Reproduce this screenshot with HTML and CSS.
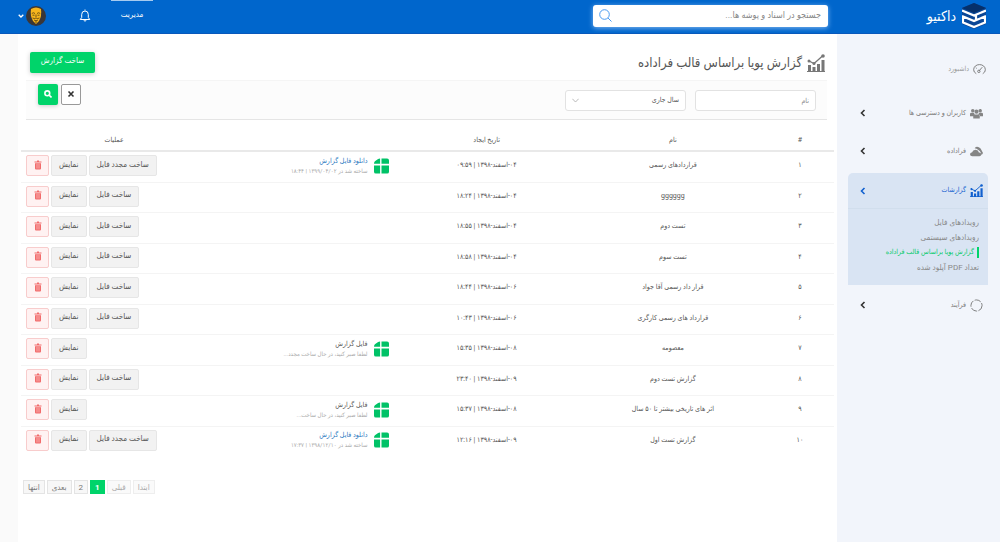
FILE: index.html
```html
<!DOCTYPE html>
<html lang="fa" dir="rtl">
<head>
<meta charset="utf-8">
<meta name="viewport" content="width=device-width, initial-scale=1">
<title>داکتیو</title>
<link rel="stylesheet" href="styles.css">
</head>
<body>
<svg width="0" height="0" class="sprite" aria-hidden="true">
  <symbol id="chart" viewBox="0 0 18 18"><path d="M1 11h3v6H1zM5.500 13h3v4h-3zM10 10h3v7h-3zM14.500 6h3v11h-3zM0 17h18v1H0z" fill="currentColor"/><path d="M2 7l5 2.500L11 6l5-4.500" fill="none" stroke="currentColor" stroke-width="1.300"/><circle cx="2" cy="7" r="1.500" fill="currentColor"/><circle cx="7" cy="9.500" r="1.500" fill="currentColor"/><circle cx="16" cy="2" r="1.800" fill="currentColor"/></symbol>
  <symbol id="chev" viewBox="0 0 6 8"><path d="M4.500 1L1.500 4l3 3" fill="none" stroke="currentColor" stroke-width="1.600"/></symbol>
  <symbol id="trash" viewBox="0 0 8 10"><path d="M0.500 2h7M3 1h2" stroke="currentColor" fill="none" stroke-width="1.200"/><path d="M1 3.200h6V8.500q0 1-1 1H2q-1 0-1-1z" fill="currentColor"/><path d="M3 4v4.500M5 4v4.500" stroke="#fff0f0" stroke-width=".5"/></symbol>
  <symbol id="sheet" viewBox="0 0 16 16"><path d="M6.500 0v5.500H0q0-1.500 1-2.500L4 .700Q5 0 6.500 0zM8 0h6q2 0 2 2v3.500H8zM0 7.500h6.500V16H2q-2 0-2-2zM8 7.500h8V14q0 2-2 2H8z" fill="currentColor"/></symbol>
</svg>
<header class="topbar">
  <a class="brand" href="#"><svg class="brand-logo" viewBox="0 0 24 26"><path d="M0 5L12 0l12 5v16l-12 5L0 21z" fill="#0b4796"/><path d="M0 5L12 0l12 5-12 5z" fill="#06306a"/><path d="M0 7.500l12 5 12-5M14 12v4.500M0 13l12 5 12-5M1 13v6M23 13v6M0 19l12 5 12-5" fill="none" stroke="#fff" stroke-width="2.200"/></svg><span>داکتیو</span></a>
  <form class="search"><input type="search" aria-label="جستجو" placeholder="جستجو در اسناد و پوشه ها..."><button type="button" aria-label="جستجو"><svg viewBox="0 0 13 13"><circle cx="5.500" cy="5.500" r="4.800"/><path d="M9 9l3.500 3.500"/></svg></button></form>
  <nav class="tools">
    <a class="tab" href="#">مدیریت</a>
    <button class="bell" type="button" aria-label="اعلان ها"><svg viewBox="0 0 11 13"><path d="M5.500.5v1M.7 10.500h9.600L8.800 8.500V5.500q0-3.500-3.300-3.500T2.200 5.500v3zM4 11q1.500 2.500 3 0"/></svg></button>
    <button class="user" type="button" aria-label="حساب کاربری"><svg class="avatar" viewBox="0 0 20 20"><circle cx="10" cy="10" r="10" fill="#3a3636"/><path d="M5 3q5-3 10 0 1 7-2 12l-3 3-3-3Q4 10 5 3z" fill="#f6b51d"/><path d="M5.800 7.500q1.500-1.500 3.200 0M11 7.500q1.700-1.500 3.200 0M6.500 9.200h2M11.500 9.200h2M6.500 12q2 1 3.500 0 1.500 1 3.500 0M8 14q2 1.500 4 0M10 8.500V11M10 15v2" stroke="#3a2a10" stroke-width=".7" fill="none"/></svg><svg class="caret" viewBox="0 0 6 4"><path d="M.7.700L3 3 5.300.700"/></svg></button>
  </nav>
</header>
<div class="shell">
  <aside class="sidebar">
    <a class="item dash" href="#"><svg class="ico line" viewBox="0 0 14 12"><path d="M3.500 10.500Q.7 9 .7 6.300C.7 3 3.500.7 7 .7s6.300 2.300 6.300 5.600q0 2.700-2.800 4.200M6.500 7.500L10 3.500M3 4l1 .8"/><circle cx="6.300" cy="8" r="1.300"/></svg><span>داشبورد</span></a>
    <a class="item" href="#"><svg class="ico" viewBox="0 0 14 12"><circle cx="3" cy="3" r="1.900"/><circle cx="11" cy="3" r="1.900"/><circle cx="7" cy="4" r="2.200"/><path d="M0 9V6.500q0-1.300 1.500-1.300h2.500L5 6.500 3.500 9zM14 9V6.500q0-1.300-1.500-1.300H10L9 6.500 10.500 9zM3.500 11.500V8.500Q3.500 7 5 7h4q1.500 0 1.500 1.500v3z"/></svg><span>کاربران و دسترسی ها</span><svg class="chev"><use href="#chev"/></svg></a>
    <a class="item" href="#"><svg class="ico" viewBox="0 0 14 12"><path d="M5 2.500Q7 0 9.500 1.500q3 1.500 4.500 6l-1.500 2.500Q12 6 9 4.500 7 2.500 5 2.500z"/><path d="M2.500 11Q0 11 0 9t2.300-2.300Q3 4 6 4q3 .2 3.600 3Q12 7 12 9.200 12 11 10 11z"/></svg><span>فراداده</span><svg class="chev"><use href="#chev"/></svg></a>
    <section class="group">
      <a class="item active" href="#"><svg class="ico"><use href="#chart"/></svg><span>گزارشات</span><svg class="chev"><use href="#chev"/></svg></a>
      <ul class="sub">
        <li><a href="#">رویدادهای فایل</a></li>
        <li><a href="#">رویدادهای سیستمی</a></li>
        <li><a class="current" href="#">گزارش پویا براساس قالب فراداده</a></li>
        <li><a href="#">تعداد PDF آپلود شده</a></li>
      </ul>
    </section>
    <a class="item" href="#"><svg class="ico line" viewBox="0 0 14 14"><circle cx="7" cy="7" r="6" stroke-dasharray="7 1.500"/></svg><span>فرآیند</span><svg class="chev"><use href="#chev"/></svg></a>
  </aside>
  <main class="content">
    <div class="heading"><h1><svg><use href="#chart"/></svg>گزارش پویا براساس قالب فراداده</h1><button class="build" type="button">ساخت گزارش</button></div>
    <form class="filter">
      <input type="text" aria-label="نام" placeholder="نام">
      <div class="pick"><select aria-label="بازه زمانی"><option>سال جاری</option></select><svg viewBox="0 0 6 4"><path d="M.3.500L3 3.300 5.700.500"/></svg></div>
      <div class="filter-actions"><button class="clear" type="button" aria-label="پاک کردن"><svg viewBox="0 0 8 8"><path d="M1.500 1.500l5 5M6.500 1.500l-5 5"/></svg></button><button class="go" type="button" aria-label="جستجو"><svg viewBox="0 0 8 8"><circle cx="3.300" cy="3.300" r="2.400"/><path d="M5 5l2.500 2.500"/></svg></button></div>
    </form>
    <table class="reports">
      <thead><tr><th class="num">#</th><th>نام</th><th>تاریخ ایجاد</th><th></th><th>عملیات</th></tr></thead>
      <tbody id="rows"></tbody>
    </table>
    <nav class="pager" aria-label="صفحات"><button type="button" disabled>ابتدا</button><button type="button" disabled>قبلی</button><button type="button" class="on">1</button><button type="button">2</button><button type="button">بعدی</button><button type="button">انتها</button></nav>
  </main>
</div>
<script src="app.js"></script>
</body>
</html>
```

FILE: styles.css
```css
* { box-sizing: border-box; }
body { margin: 0; min-height: 100vh; display: flex; flex-direction: column; background: #fafafa; color: #555; font: 8px/15px Roboto, "DejaVu Sans Condensed", "DejaVu Sans", sans-serif; }
a { color: inherit; text-decoration: none; }
button, input, select { font: inherit; color: inherit; margin: 0; padding: 0; }
button { border: 0; background: none; display: inline-flex; align-items: center; justify-content: center; }
.sprite { position: absolute; }

.topbar { height: 34px; flex: none; display: flex; align-items: center; background: #0066cc; border-bottom: 1px solid #0858bb; color: #fff; padding: 0 14px 2px 18px; }
.brand { display: flex; align-items: center; gap: 6px; width: 158px; font-size: 14px; line-height: 24px; }
.brand-logo { width: 24px; height: 26px; }
.search { display: flex; align-items: center; width: 235px; height: 22px; background: #fff; border-radius: 3px; box-shadow: 0 1px 5px #83b9f2; padding: 0 7px 0 6px; }
.search input { flex: 1; min-width: 0; border: 0; outline: 0; background: none; font-size: 9px; }
.search input::placeholder { color: #888; opacity: 1; }
.search svg { width: 13px; height: 13px; fill: none; stroke: #4a9af0; }
.tools { flex: 1; display: flex; align-items: center; justify-content: flex-end; align-self: stretch; }
.tab { align-self: stretch; width: 42px; margin-left: 20px; border-top: 1px solid #a6cbf0; text-align: center; line-height: 27px; }
.bell { margin-left: 33px; }
.bell svg { width: 12px; height: 13px; fill: none; stroke: #fff; }
.user { gap: 2px; }
.avatar { width: 20px; height: 20px; }
.caret { width: 6px; height: 4px; fill: none; stroke: #fff; stroke-width: 1.3; }

.shell { flex: 1; display: flex; }
.sidebar { width: 163px; flex: none; background: #f2f5fb; padding: 16px 12px 16px 11px; color: #777; }
.item { display: flex; align-items: center; height: 38px; padding: 0 5px 0 12px; gap: 4px; font-size: 7px; }
.item span { flex: 1; }
.dash { margin-bottom: 6px; color: #999; padding-right: 2px; }
.ico { width: 13px; height: 13px; fill: currentColor; color: #858585; }
.ico.line { fill: none; stroke: #777; }
.chev { width: 6px; height: 8px; color: #333; }
.group { background: #d9e4f3; border-radius: 5px 5px 0 0; height: 112px; margin: 3px 0 1px; }
.group .item { height: 36px; border-bottom: 1px solid #d1deed; }
.active, .active .ico, .active .chev { color: #1160cf; }
.sub { list-style: none; margin: 0; padding: 6px 9px; color: #888; }
.sub a { display: block; }
.sub .current { color: #00c968; border-right: 2px solid #00d46a; padding-right: 3px; font-size: 7px; line-height: 11px; margin: 2px 0; }

.content { flex: 1; min-width: 0; margin-left: 18px; background: #fff; padding: 11px 3px; }
.heading { display: flex; align-items: center; justify-content: space-between; height: 35px; padding: 0 9px; }
h1 { display: flex; align-items: center; gap: 5px; margin: 0; font-size: 13px; line-height: 20px; font-weight: 400; color: #555; }
h1 svg { width: 18px; height: 18px; color: #777; }
.build { width: 65px; height: 21px; background: #00d46a; color: #fff; border-radius: 2px; box-shadow: 0 1px 5px #ccc; padding-bottom: 4px; }
.filter { display: flex; height: 40px; margin: 0 7px 0 5px; padding: 9px 11px 0 12px; gap: 9px; background: #fcfcfc; border-top: 1px solid #f5f5f5; border-bottom: 1px solid #e5e5e5; }
.filter > input, .pick { width: 121px; height: 21px; border: 1px solid #e2e2e2; border-radius: 3px; background: #fff; padding: 0 6px; }
.filter > input { font-size: 7px; }
.filter > input::placeholder { color: #888; opacity: 1; }
.pick { display: flex; align-items: center; font-size: 7px; }
.pick select { flex: 1; height: 19px; border: 0; outline: 0; appearance: none; background: none; }
.pick svg { width: 7px; height: 5px; fill: none; stroke: #aaa; stroke-width: .7; }
.filter-actions { margin-right: auto; margin-top: -6px; display: flex; gap: 3px; }
.filter-actions button { width: 20px; height: 21px; border-radius: 2px; padding-bottom: 2px; }
.filter-actions svg { width: 8px; height: 8px; fill: none; stroke: currentColor; stroke-width: 1.6; }
.clear { border: 1px solid #999; background: #fff; color: #333; }
.go { background: #00d46a; color: #fff; box-shadow: 0 1px 4px #ccc; }

.reports { width: 100%; margin-top: 11px; table-layout: fixed; border-collapse: collapse; text-align: center; font-size: 7px; }
.reports th { height: 20px; padding: 0; font-weight: 400; border-bottom: 2px solid #e9e9e9; }
.reports td { height: 31px; padding: 0 5px 2px; border-bottom: 1px solid #f4f4f4; white-space: nowrap; }
.reports tr:nth-child(even) td { height: 30px; }
.reports tr:last-child td { border-bottom: 0; }
.reports .num { width: 68px; }
.file { display: flex; align-items: center; gap: 6px; text-align: right; line-height: 10px; }
.file svg { width: 15px; height: 16px; color: #00c267; }
.file a, .file b { display: block; font-weight: 400; }
.file a { color: #2a78c0; }
.file small { display: block; font-size: 6px; color: #aaa; }
.acts { display: flex; justify-content: flex-end; gap: 2px; font-size: 8px; }
.acts button { height: 21px; padding: 0 7px 3px; border: 1px solid #e6e6e6; border-radius: 2px; background: #f2f2f2; }
.acts .del { width: 23px; border-color: #f8cccc; background: #fff2f2; color: #f26b6b; padding: 0 0 2px; }
.del svg { width: 8px; height: 10px; }
.pager { display: flex; justify-content: flex-end; gap: 2px; margin-top: 24px; padding-left: 2px; }
.pager button { height: 14px; padding: 0 4px; border: 1px solid #e4e4e4; background: #f7f7f7; color: #777; }
.pager button:disabled { color: #aaa; border-color: #eee; background: #fafafa; }
.pager .on { background: #00d46a; border-color: #00d46a; color: #fff; font-weight: 700; }
```

FILE: app.js
```js
const rows = [
  ["۱", "قراردادهای رسمی", "۰۴-اسفند-۱۳۹۸ | ۰۹:۵۹", "ready", "ساخته شد در ۱۳۹۹/۰۴/۰۲ | ۱۸:۴۴"],
  ["۲", "gggggg", "۰۴-اسفند-۱۳۹۸ | ۱۸:۲۴"],
  ["۳", "تست دوم", "۰۴-اسفند-۱۳۹۸ | ۱۸:۵۵"],
  ["۴", "تست سوم", "۰۴-اسفند-۱۳۹۸ | ۱۸:۵۸"],
  ["۵", "قرار داد رسمی آقا جواد", "۰۶-اسفند-۱۳۹۸ | ۱۸:۴۴"],
  ["۶", "قرارداد های رسمی کارگری", "۰۶-اسفند-۱۳۹۸ | ۱۰:۴۳"],
  ["۷", "معصومه", "۰۸-اسفند-۱۳۹۸ | ۱۵:۳۵", "wait", "لطفا صبر کنید، در حال ساخت مجدد..."],
  ["۸", "گزارش تست دوم", "۰۹-اسفند-۱۳۹۸ | ۲۳:۴۰"],
  ["۹", "اثر های تاریخی بیشتر تا ۵۰ سال", "۰۸-اسفند-۱۳۹۸ | ۱۵:۳۷", "wait", "لطفا صبر کنید، در حال ساخت..."],
  ["۱۰", "گزارش تست اول", "۰۹-اسفند-۱۳۹۸ | ۱۲:۱۶", "ready", "ساخته شد در ۱۳۹۸/۱۲/۱۰ | ۱۷:۳۷"]
];
document.getElementById("rows").innerHTML = rows.map(([n, name, date, state, note]) => {
  const title = state === "ready" ? '<a href="#">دانلود فایل گزارش</a>' : "<b>فایل گزارش</b>";
  const file = state ? `<div class="file"><svg><use href="#sheet"/></svg><div>${title}<small>${note}</small></div></div>` : "";
  const build = state === "wait" ? "" : `<button type="button">${state ? "ساخت مجدد فایل" : "ساخت فایل"}</button>`;
  return `<tr><td>${n}</td><td>${name}</td><td>${date}</td><td>${file}</td><td><div class="acts">${build}<button type="button">نمایش</button><button type="button" class="del" aria-label="حذف"><svg><use href="#trash"/></svg></button></div></td></tr>`;
}).join("");
```
